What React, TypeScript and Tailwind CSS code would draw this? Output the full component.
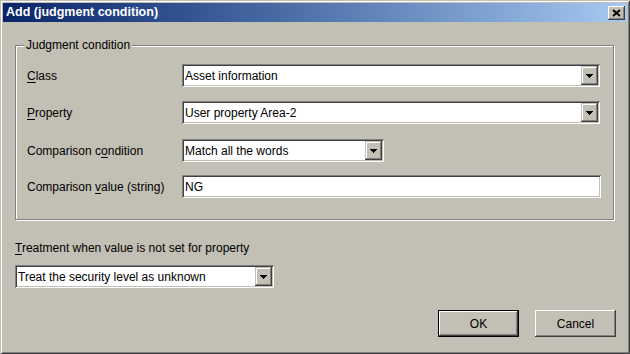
import React from "react";

function Arrow() {
  return (
    <svg width="7" height="4" viewBox="0 0 7 4" className="block">
      <path d="M0 0h7L3.5 4z" fill="#000" shapeRendering="crispEdges" />
    </svg>
  );
}

function DropBtn() {
  return (
    <div className="w-[17px] h-full flex items-center justify-center bg-[#c2bfb4] shadow-[inset_-1px_-1px_0_#404040,inset_1px_1px_0_#c2bfb4,inset_-2px_-2px_0_#808080,inset_2px_2px_0_#ffffff]">
      <Arrow />
    </div>
  );
}

function Select({ text, w }: { text: string; w: string }) {
  return (
    <div
      className={`${w} h-[23px] bg-white flex items-stretch p-[2px] shadow-[inset_1px_1px_0_#808080,inset_-1px_-1px_0_#ffffff,inset_2px_2px_0_#404040,inset_-2px_-2px_0_#c2bfb4]`}
    >
      <div className="flex-1 flex items-center pl-[1px] text-[12px] text-black leading-none whitespace-nowrap overflow-hidden">
        {text}
      </div>
      <DropBtn />
    </div>
  );
}

function Input({ text, w }: { text: string; w: string }) {
  return (
    <div
      className={`${w} h-[23px] bg-white flex items-center pl-[3px] text-[12px] text-black leading-none shadow-[inset_1px_1px_0_#808080,inset_-1px_-1px_0_#ffffff,inset_2px_2px_0_#404040,inset_-2px_-2px_0_#c2bfb4]`}
    >
      {text}
    </div>
  );
}

function Row({
  label,
  children,
  className,
}: {
  label: React.ReactNode;
  children: React.ReactNode;
  className?: string;
}) {
  return (
    <div className={`flex items-center h-[23px] ${className ?? ""}`}>
      <div className="w-[155px] shrink-0 text-[12px] text-black leading-none whitespace-nowrap">
        {label}
      </div>
      {children}
    </div>
  );
}

function U({ children }: { children: React.ReactNode }) {
  return (
    <span className="underline decoration-1 underline-offset-[2px]">{children}</span>
  );
}

export default function App() {
  return (
    <div
      className="w-[630px] h-[354px] bg-[#c2bfb4] p-[3px] flex flex-col shadow-[inset_1px_1px_0_#c2bfb4,inset_-1px_-1px_0_#404040,inset_2px_2px_0_#ffffff,inset_-2px_-2px_0_#808080]"
      style={{ fontFamily: '"Liberation Sans", Arial, sans-serif' }}
    >
      {/* Title bar */}
      <div className="h-[19px] shrink-0 flex items-center justify-between pl-[3px] pr-[2px] bg-gradient-to-r from-[#0a246a] to-[#a6caf0]">
        <span className="text-white font-bold text-[12.5px] leading-none whitespace-nowrap">
          Add (judgment condition)
        </span>
        <div className="w-[17px] h-[14px] flex items-center justify-center bg-[#c2bfb4] shadow-[inset_-1px_-1px_0_#404040,inset_1px_1px_0_#ffffff,inset_-2px_-2px_0_#808080]">
          <svg width="9" height="8" viewBox="0 0 9 8" className="block">
            <path
              d="M1 1L8 7M8 1L1 7"
              stroke="#000"
              strokeWidth="2"
              fill="none"
            />
          </svg>
        </div>
      </div>

      {/* Body */}
      <div className="flex-1 flex flex-col pl-[12px] pr-[11px]">
        {/* Group box */}
        <div className="relative mt-[23px] w-[599px] h-[175px] border border-[#808080] shadow-[1px_1px_0_#ffffff,inset_1px_1px_0_#ffffff] pt-[18px] pl-[11px]">
          <div className="absolute -top-[8px] left-[8px] px-[2px] h-[14px] flex items-center bg-[#c2bfb4] text-[12px] text-black leading-none whitespace-nowrap">
            Judgment condition
          </div>
          <Row label={<><U>C</U>lass</>}>
            <Select text="Asset information" w="w-[418px]" />
          </Row>
          <Row label={<><U>P</U>roperty</>} className="mt-[14px]">
            <Select text="User property Area-2" w="w-[418px]" />
          </Row>
          <Row label={<>Comparison c<U>o</U>ndition</>} className="mt-[15px]">
            <Select text="Match all the words" w="w-[202px]" />
          </Row>
          <Row label={<>Comparison <U>v</U>alue (string)</>} className="mt-[13px]">
            <Input text="NG" w="w-[419px]" />
          </Row>
        </div>

        <div className="mt-[21px] h-[14px] flex items-center text-[12px] text-black leading-none whitespace-nowrap">
          <span>
            <U>T</U>reatment when value is not set for property
          </span>
        </div>
        <div className="mt-[10px]">
          <Select text="Treat the security level as unknown" w="w-[259px]" />
        </div>

        <div className="mt-[22px] flex justify-end gap-[16px]">
          <div className="w-[81px] h-[27px] flex items-center justify-center bg-[#c2bfb4] text-[12px] text-black leading-none shadow-[inset_0_0_0_1px_#000000,inset_-2px_-2px_0_#404040,inset_2px_2px_0_#ffffff,inset_-3px_-3px_0_#808080]">
            OK
          </div>
          <div className="w-[81px] h-[27px] flex items-center justify-center bg-[#c2bfb4] text-[12px] text-black leading-none shadow-[inset_-1px_-1px_0_#404040,inset_1px_1px_0_#ffffff,inset_-2px_-2px_0_#808080]">
            Cancel
          </div>
        </div>
      </div>
    </div>
  );
}
